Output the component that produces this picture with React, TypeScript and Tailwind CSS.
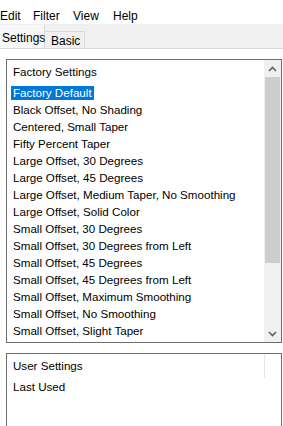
import React from "react";

const items = [
  "Factory Default",
  "Black Offset, No Shading",
  "Centered, Small Taper",
  "Fifty Percent Taper",
  "Large Offset, 30 Degrees",
  "Large Offset, 45 Degrees",
  "Large Offset, Medium Taper, No Smoothing",
  "Large Offset, Solid Color",
  "Small Offset, 30 Degrees",
  "Small Offset, 30 Degrees from Left",
  "Small Offset, 45 Degrees",
  "Small Offset, 45 Degrees from Left",
  "Small Offset, Maximum Smoothing",
  "Small Offset, No Smoothing",
  "Small Offset, Slight Taper",
];

export default function App() {
  return (
    <div
      className="w-[283px] h-[426px] bg-white overflow-hidden text-[11.6px] text-black"
      style={{ fontFamily: '"Liberation Sans", Arial, sans-serif' }}
    >
      {/* Menu bar */}
      <div className="h-[24px] flex items-start pt-[8px] leading-[16px] text-[12px]">
        <span className="w-[33px]">Edit</span>
        <span className="w-[40px]">Filter</span>
        <span className="w-[40px]">View</span>
        <span>Help</span>
      </div>

      {/* Tab strip */}
      <div className="h-[25px] bg-[#f0f0f0] flex items-end border-b border-[#dadada] text-[12px]">
        <div className="w-[45px] h-[23px] bg-[#f7f7f7] border-r border-[#dadada] pl-[2px] pt-[6px] leading-[14px]">
          Settings
        </div>
        <div className="w-[40px] h-[17px] border-t border-r border-[#dadada] bg-[#f0f0f0] pl-[6px] pt-[2px] leading-[14px]">
          Basic
        </div>
      </div>

      {/* Factory settings list */}
      <div className="ml-[6px] mt-[10px] w-[276px] h-[284px] border border-[#6e6e6e] flex">
        <div className="flex-1 pt-[3px]">
          <div className="h-[17px] leading-[17px] pl-[6px]">Factory Settings</div>
          <div className="mt-[4px]">
            {items.map((t, i) => (
              <div key={t} className="h-[17px] flex items-center pl-[4px]">
                {i === 0 ? (
                  <span className="bg-[#0078d7] text-white px-[2px] h-[14px] leading-[14px]">{t}</span>
                ) : (
                  <span className="px-[2px] leading-[14px]">{t}</span>
                )}
              </div>
            ))}
          </div>
        </div>
        <div className="w-[17px] bg-[#f0f0f0] flex flex-col">
          <div className="h-[17px] flex items-center justify-center">
            <svg width="9" height="6" viewBox="0 0 9 6">
              <path d="M1 5 L4.5 1.5 L8 5" fill="none" stroke="#606060" strokeWidth="1.6" />
            </svg>
          </div>
          <div className="h-[186px] mx-[1px] bg-[#cdcdcd]" />
          <div className="flex-1" />
          <div className="h-[17px] flex items-center justify-center">
            <svg width="9" height="6" viewBox="0 0 9 6">
              <path d="M1 1 L4.5 4.5 L8 1" fill="none" stroke="#606060" strokeWidth="1.6" />
            </svg>
          </div>
        </div>
      </div>

      {/* User settings list */}
      <div className="ml-[6px] mt-[10px] w-[276px] h-[100px] border-t border-l border-r border-[#6e6e6e] flex">
        <div className="flex-1 pt-[3px]">
          <div className="h-[17px] leading-[17px] pl-[6px]">User Settings</div>
          <div className="mt-[4px] h-[17px] leading-[17px] pl-[6px]">Last Used</div>
        </div>
        <div className="w-[17px]">
          <div className="w-[1px] h-[24px] bg-[#e5e5e5]" />
        </div>
      </div>
    </div>
  );
}
